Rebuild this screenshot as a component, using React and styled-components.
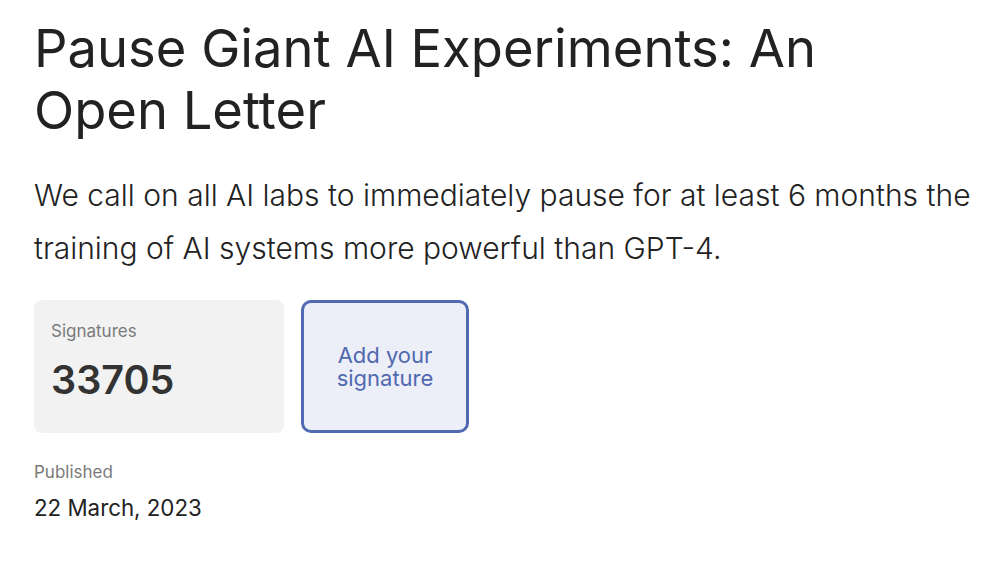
import styled, { createGlobalStyle } from 'styled-components';

const GlobalStyle = createGlobalStyle`
  * { box-sizing: border-box; }
  body {
    margin: 0;
    background: #ffffff;
    font-family: Inter, "Noto Sans", sans-serif;
    color: #222;
  }
`;

const Page = styled.main`
  padding: 17px 34px 0;
`;

const Title = styled.h1`
  margin: 0;
  max-width: 850px;
  font-size: 52.5px;
  line-height: 62px;
  font-weight: 400;
  color: #222;
`;

const Lead = styled.p`
  margin: 28px 0 0;
  font-size: 30px;
  line-height: 53px;
  font-weight: 300;
  color: #222;
`;

const Actions = styled.div`
  display: flex;
  gap: 17px;
  margin-top: 25px;
`;

const StatCard = styled.div`
  width: 250px;
  height: 133px;
  background: #f2f2f2;
  border-radius: 8px;
  padding: 20px 17px;
  display: flex;
  flex-direction: column;
`;

const StatLabel = styled.span`
  font-size: 17px;
  color: #7a7a7a;
  line-height: 22px;
`;

const StatValue = styled.span`
  margin-top: 14px;
  font-size: 39.5px;
  font-weight: 600;
  color: #333;
  line-height: 48px;
`;

const SignButton = styled.button`
  width: 168px;
  height: 133px;
  border: 3px solid #5169b0;
  border-radius: 10px;
  background: #eceff7;
  color: #5169b0;
  font-family: inherit;
  font-size: 22px;
  line-height: 23px;
  padding: 0 16px;
  cursor: pointer;
`;

const Meta = styled.div`
  margin-top: 28px;
  display: flex;
  flex-direction: column;
`;

const MetaLabel = styled.span`
  font-size: 17px;
  color: #7a7a7a;
  line-height: 22px;
`;

const MetaValue = styled.span`
  margin-top: 11px;
  font-size: 22.3px;
  color: #222;
  line-height: 28px;
`;

export default function App() {
  return (
    <>
      <GlobalStyle />
      <Page>
        <Title>Pause Giant AI Experiments: An Open Letter</Title>
        <Lead>
          We call on all AI labs to immediately pause for at least 6 months the training of AI
          systems more powerful than GPT-4.
        </Lead>
        <Actions>
          <StatCard>
            <StatLabel>Signatures</StatLabel>
            <StatValue>33705</StatValue>
          </StatCard>
          <SignButton>Add your signature</SignButton>
        </Actions>
        <Meta>
          <MetaLabel>Published</MetaLabel>
          <MetaValue>22 March, 2023</MetaValue>
        </Meta>
      </Page>
    </>
  );
}
